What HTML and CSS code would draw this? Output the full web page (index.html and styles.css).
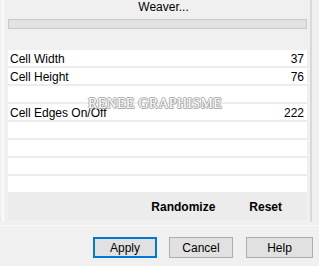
FILE: index.html
```html
<!DOCTYPE html>
<html lang="en">
<head>
  <meta charset="UTF-8" />
  <title>Weaver</title>
  <link rel="stylesheet" href="styles.css">
</head>
<body>
  <div class="frame">
    <div class="title">Weaver...</div>
    <div class="progress"></div>

    <div class="params">
      <div class="row"><span>Cell Width</span><span>37</span></div>
      <div class="row"><span>Cell Height</span><span>76</span></div>
      <div class="row"></div>
      <div class="row"><span>Cell Edges On/Off</span><span>222</span></div>
      <div class="row"></div>
      <div class="row"></div>
      <div class="row"></div>
      <div class="row"></div>
      <div class="tools">
        <span class="randomize">Randomize</span>
        <span class="reset">Reset</span>
      </div>
    </div>
  </div>

  <div class="actions">
    <button class="btn default">Apply</button>
    <button class="btn">Cancel</button>
    <button class="btn help">Help</button>
  </div>

  <div class="watermark">RENEE GRAPHISME</div>
</body>
</html>
```

FILE: styles.css
```css
body {
  margin: 0;
  width: 319px;
  height: 266px;
  background: #f0f0f0;
  font-family: "Liberation Sans", Arial, sans-serif;
  font-size: 12px;
  color: #000;
  position: relative;
  overflow: hidden;
}
.frame {
  margin-left: 2px;
  width: 299px;
  height: 222px;
  border-left: 2px solid #fbfbfb;
  border-right: 2px solid #d9d9d9;
  padding: 0 3px 0 4px;
}
.title {
  height: 19px;
  line-height: 15px;
  text-align: center;
  padding-left: 12px;
}
.progress {
  height: 8px;
  background: #e2e2e2;
  border: 1px solid #c9c9c9;
  margin-bottom: 21px;
}
.params {
  background: #fff;
}
.row {
  height: 16px;
  border-bottom: 2px solid #ececec;
  display: flex;
  justify-content: space-between;
  align-items: center;
  padding: 1px 3px 0 2px;
  box-sizing: content-box;
  height: 15px;
}
.tools {
  height: 26px;
  background: #ececec;
  display: flex;
  align-items: center;
  justify-content: flex-end;
  font-weight: bold;
  padding-right: 25px;
}
.randomize { margin-right: 34px; }
.actions {
  border-top: 1px solid #fafafa;
  margin-top: 3px;
  padding-top: 11px;
  display: flex;
  justify-content: flex-end;
  gap: 12px;
  padding-right: 6px;
}
.btn {
  width: 64px;
  height: 21px;
  background: #e1e1e1;
  border: 1px solid #adadad;
  font-family: "Liberation Sans", Arial, sans-serif;
  font-size: 12px;
  padding: 0;
  color: #000;
}
.btn.default {
  border: 2px solid #0078d7;
}
.btn.help { width: 67px; margin-left: 1px; }
.watermark {
  position: absolute;
  left: 88px;
  top: 96px;
  font-family: "Liberation Serif", serif;
  font-size: 14px;
  letter-spacing: 0.3px;
  color: #fff;
  text-shadow: 1px 0 #a8a8a8, -1px 0 #a8a8a8, 0 1px #a8a8a8, 0 -1px #a8a8a8, 1px 1px #c8c8c8;
}
```
